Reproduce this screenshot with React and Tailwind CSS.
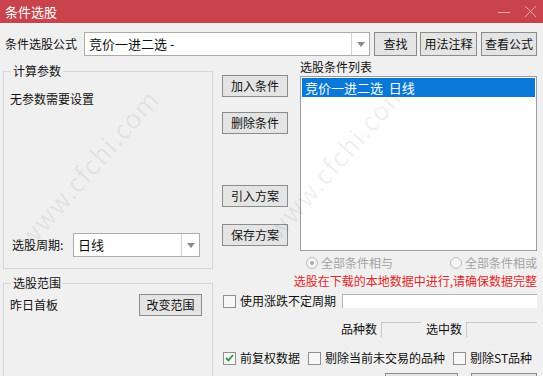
import React from "react";

const font = { fontFamily: '"Noto Sans CJK SC", "Microsoft YaHei", sans-serif' };

const Btn = ({ children, className = "" }) => (
    <button className={`h-[22px] border border-[#8c8c8c] bg-[#e4e4e4] text-[12px] leading-none text-[#111] ${className}`}>
        {children}
    </button>
);

const Arrow = () => (
    <svg width="8" height="5" viewBox="0 0 8 5">
        <path d="M0 0 L8 0 L4 5 Z" fill="#8a8a8a" />
    </svg>
);

const Combo = ({ value, className = "" }) => (
    <div className={`flex h-[24px] items-stretch border border-[#acacac] bg-white ${className}`}>
        <span className="flex-1 pl-[4px] text-[13px] leading-[22px] text-[#111]">{value}</span>
        <span className="flex w-[18px] items-center justify-center border-l border-[#d4d4d4]">
            <Arrow />
        </span>
    </div>
);

const Check = ({ checked, label, className = "" }) => (
    <label className={`flex items-center gap-[4px] ${className}`}>
        <span className="flex h-[13px] w-[13px] items-center justify-center border border-[#8e8f8f] bg-[#f7f7f7]">
            {checked && (
                <svg width="9" height="8" viewBox="0 0 9 8">
                    <path d="M1 4 L3.5 6.5 L8 1" stroke="#2e9a3a" strokeWidth="1.8" fill="none" />
                </svg>
            )}
        </span>
        <span className="text-[12px] text-[#111]">{label}</span>
    </label>
);

const Radio = ({ label, on }) => (
    <span className="flex items-center gap-[3px] text-[12px] text-[#a3a3a3]">
        <span className="flex h-[12px] w-[12px] items-center justify-center rounded-full border border-[#bdbdbd] bg-[#f4f4f4]">
            {on && <span className="h-[4px] w-[4px] rounded-full bg-[#a8a8a8]" />}
        </span>
        {label}
    </span>
);

const Group = ({ title, className = "", children }) => (
    <fieldset className={`border border-[#d5d5d5] px-[6px] ${className}`}>
        <legend className="ml-[1px] px-[2px] text-[12px] leading-[16px] text-[#111]">{title}</legend>
        {children}
    </fieldset>
);

export default function App() {
    return (
        <div className="relative h-[376px] w-[543px] overflow-hidden bg-[#f0f0f0]" style={font}>
            <div className="flex h-[23px] items-center justify-between bg-[#c8434b] pl-[5px] pr-[6px]">
                <span className="text-[13px] text-white">条件选股</span>
                <div className="flex items-center gap-[14px]">
                    <svg width="12" height="12" viewBox="0 0 12 12">
                        <path d="M0 6.5 H12" stroke="#e9a8ac" strokeWidth="1" />
                    </svg>
                    <svg width="13" height="13" viewBox="0 0 13 13">
                        <path d="M1 1 L12 12 M12 1 L1 12" stroke="#e9a8ac" strokeWidth="1" />
                    </svg>
                </div>
            </div>

            <div className="mt-[9px] flex h-[24px] items-center pl-[5px]">
                <span className="w-[79px] text-[12px] text-[#111]">条件选股公式</span>
                <Combo value="竞价一进二选 -" className="w-[286px]" />
                <Btn className="ml-[4px] h-[24px] w-[43px]">查找</Btn>
                <Btn className="ml-[3px] h-[24px] w-[57px]">用法注释</Btn>
                <Btn className="ml-[4px] h-[24px] w-[56px]">查看公式</Btn>
            </div>

            <div className="flex pl-[3px]">
                <div className="mt-[7px] w-[210px]">
                    <Group title="计算参数" className="h-[206px]">
                        <div className="flex h-[182px] flex-col">
                            <p className="mt-[12px] text-[12px] leading-[16px] text-[#111]">无参数需要设置</p>
                            <div className="mt-auto mb-[4px] flex items-center">
                                <span className="ml-[2px] w-[61px] text-[12px] text-[#111]">选股周期:</span>
                                <Combo value="日线" className="w-[127px]" />
                            </div>
                        </div>
                    </Group>
                    <Group title="选股范围" className="mt-[6px] h-[120px]">
                        <div className="flex items-center justify-between pr-[4px] pt-[3px]">
                            <span className="text-[12px] text-[#111]">昨日首板</span>
                            <Btn className="w-[63px]">改变范围</Btn>
                        </div>
                    </Group>
                </div>

                <div className="ml-[9px] flex w-[315px] flex-col">
                    <div className="flex">
                        <div className="flex w-[66px] flex-col pt-[19px]">
                            <Btn>加入条件</Btn>
                            <Btn className="mt-[15px]">删除条件</Btn>
                            <Btn className="mt-[51px]">引入方案</Btn>
                            <Btn className="mt-[17px]">保存方案</Btn>
                        </div>
                        <div className="ml-[12px] flex w-[237px] flex-col">
                            <span className="mt-[3px] text-[12px] leading-[16px] text-[#111]">选股条件列表</span>
                            <div className="mt-[1px] h-[175px] border border-[#9a9da3] bg-white p-[1px]">
                                <div className="h-[19px] bg-[#0a78d6] pl-[3px] text-[13px] leading-[19px] text-white">
                                    竞价一进二选&nbsp;&nbsp;日线
                                </div>
                            </div>
                        </div>
                    </div>

                    <div className="mt-[5px] flex h-[14px] items-center justify-between pl-[84px]">
                        <Radio label="全部条件相与" on />
                        <Radio label="全部条件相或" />
                    </div>
                    <p className="mt-[3px] text-right text-[12px] leading-[16px] text-[#e0262b]">
                        选股在下载的本地数据中进行,请确保数据完整
                    </p>
                    <div className="mt-[3px] flex items-center pl-[1px]">
                        <Check label="使用涨跌不定周期" />
                        <div className="ml-[6px] h-[14px] flex-1 border-l border-t border-[#b5b5b5] bg-white" />
                    </div>
                    <div className="mt-[10px] flex items-center justify-end text-[12px] text-[#111]">
                        <span>品种数</span>
                        <span className="ml-[4px] h-[15px] w-[40px] border-l border-t border-[#c9c9c9] bg-[#f0f0f0]" />
                        <span className="ml-[5px]">选中数</span>
                        <span className="ml-[4px] h-[15px] w-[71px] border-l border-t border-[#c9c9c9] bg-[#f0f0f0]" />
                    </div>
                    <div className="mt-[11px] flex items-center pl-[1px]">
                        <Check checked label="前复权数据" />
                        <Check label="剔除当前未交易的品种" className="ml-[8px]" />
                        <Check label="剔除ST品种" className="ml-[8px]" />
                    </div>
                    <div className="mt-[6px] flex justify-end gap-[13px]">
                        <Btn className="w-[73px]"> </Btn>
                        <Btn className="w-[66px]"> </Btn>
                    </div>
                </div>
            </div>

            <span className="pointer-events-none absolute left-[-12px] top-[148px] -rotate-[49deg] text-[26px] tracking-[1px] text-[rgba(0,0,0,0.07)]">
                www.cfchi.com
            </span>
            <span className="pointer-events-none absolute left-[236px] top-[140px] -rotate-[49deg] text-[26px] tracking-[1px] text-[rgba(0,0,0,0.07)]">
                www.cfchi.com
            </span>
        </div>
    );
}
